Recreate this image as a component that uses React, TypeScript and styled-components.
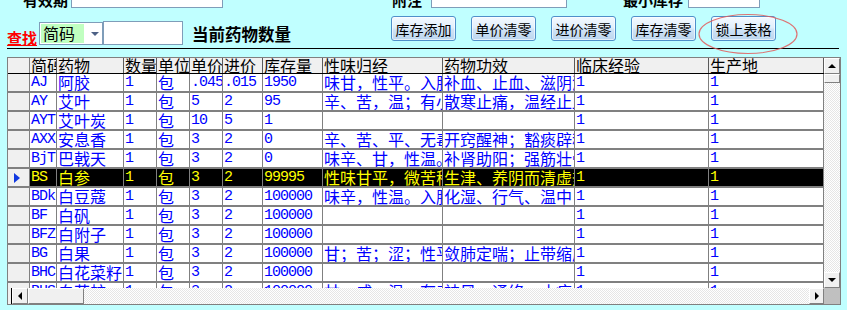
import React from "react";
import styled, { createGlobalStyle } from "styled-components";

const GlobalStyle = createGlobalStyle`
  html, body { margin: 0; padding: 0; background: #c0ffff; overflow: hidden; }
  body { font-family: "Noto Sans CJK SC", "Noto Sans", sans-serif; }
  * { box-sizing: border-box; }
`;

const COLS = "22px 27px 67px 33px 33px 33px 40px 60px 120px 132px 134px 115px";

const Page = styled.div`
  position: relative;
  width: 847px;
  height: 310px;
  overflow: hidden;
  background: #c0ffff;
`;

const TopFields = styled.div`
  display: flex;
  align-items: flex-end;
  height: 24px;
  margin-top: -16px;
  padding-left: 23px;
`;

const FieldLabel = styled.div<{ $gap: number; $w: number }>`
  margin-left: ${(p) => p.$gap}px;
  width: ${(p) => p.$w}px;
  font-size: 15px;
  font-weight: 700;
  line-height: 17px;
  white-space: nowrap;
  color: #000;
`;

const FieldBox = styled.div<{ $gap: number; $w: number }>`
  margin-left: ${(p) => p.$gap}px;
  width: ${(p) => p.$w}px;
  height: 22px;
  background: #fff;
  border: 1px solid #7f9db9;
`;

const Toolbar = styled.div`
  display: flex;
  align-items: flex-start;
  height: 32px;
  margin-top: 8px;
  padding-left: 7px;
`;

const FindLabel = styled.div`
  width: 30px;
  margin-top: 14px;
  font-size: 15px;
  font-weight: 700;
  line-height: 16px;
  color: #ff0000;
  text-decoration: underline;
  white-space: nowrap;
`;

const Combo = styled.div`
  display: flex;
  margin-left: 2px;
  margin-top: 6px;
  width: 64px;
  height: 23px;
  padding: 1px;
  background: #fff;
  border: 1px solid #7f9db9;
`;

const ComboValue = styled.div`
  width: 43px;
  height: 19px;
  padding-left: 2px;
  background: #c0ffc0;
  font-size: 16px;
  line-height: 19px;
  color: #000;
  white-space: nowrap;
`;

const ComboArrow = styled.div`
  flex: 1;
  display: flex;
  align-items: center;
  justify-content: center;
  padding-left: 4px;
  &::after {
    content: "";
    border-top: 4px solid #4d6185;
    border-left: 4px solid transparent;
    border-right: 4px solid transparent;
  }
`;

const SearchBox = styled.div`
  margin-top: 5px;
  width: 80px;
  height: 24px;
  background: #fff;
  border: 1px solid #7f9db9;
`;

const CountLabel = styled.div`
  margin-left: 9px;
  margin-top: 9px;
  width: 100px;
  font-size: 16.5px;
  font-weight: 700;
  line-height: 19px;
  color: #000;
  white-space: nowrap;
`;

const ButtonGroup = styled.div`
  display: flex;
  gap: 15px;
  margin-left: 99px;
`;

const ActionButton = styled.button`
  width: 65px;
  height: 25px;
  padding: 0;
  border: 1px solid #4f8fca;
  border-radius: 3px;
  background: linear-gradient(#f3f9ff 0%, #e2effb 45%, #cfe3f6 55%, #bcd6ef 100%);
  box-shadow: inset 0 0 0 1px rgba(255, 255, 255, 0.6);
  font-family: "Noto Sans CJK SC", "Noto Sans", sans-serif;
  font-size: 14px;
  line-height: 22px;
  color: #000;
  white-space: nowrap;
`;

const Separator = styled.div`
  margin-left: 7px;
  width: 832px;
  height: 1px;
  background: #000;
`;

const Grid = styled.div`
  display: grid;
  grid-template-columns: 816px 16px;
  grid-template-rows: 230px 16px;
  margin: 8px 0 0 7px;
  width: 834px;
  height: 248px;
  border: 1px solid #808080;
  background: #fff;
`;

const TableArea = styled.div`
  overflow: hidden;
  display: flex;
  flex-direction: column;
`;

const HeaderRow = styled.div`
  display: grid;
  grid-template-columns: ${COLS};
  height: 16px;
  flex: none;
  border-bottom: 1px solid #000;
  background: #f0f0f0;
`;

const HeaderCell = styled.div`
  overflow: hidden;
  white-space: nowrap;
  padding-left: 1px;
  border-right: 1px solid #5a5a5a;
  font-size: 16px;
  line-height: 15px;
  color: #000;
`;

const DataRow = styled.div<{ $selected?: boolean }>`
  display: grid;
  grid-template-columns: ${COLS};
  height: 19px;
  flex: none;
  border-bottom: 2px solid #808080;
  background: ${(p) => (p.$selected ? "#000" : "#fff")};
  color: ${(p) => (p.$selected ? "#ffff00" : "#0000ff")};
`;

const Indicator = styled.div`
  display: flex;
  align-items: center;
  padding-left: 6px;
  background: #f0f0f0;
  border-right: 1px solid #808080;
`;

const Pointer = styled.div`
  width: 0;
  height: 0;
  border-left: 6px solid #1038e0;
  border-top: 5px solid transparent;
  border-bottom: 5px solid transparent;
`;

const Cell = styled.div<{ $latin?: boolean }>`
  overflow: hidden;
  white-space: nowrap;
  padding-left: ${(p) => (p.$latin ? 1 : 1)}px;
  border-right: 1px solid #808080;
  font-family: ${(p) =>
    p.$latin
      ? '"Liberation Mono", "DejaVu Sans Mono", monospace'
      : '"Noto Sans CJK SC", "Noto Sans", sans-serif'};
  font-size: ${(p) => (p.$latin ? 15 : 16)}px;
  letter-spacing: ${(p) => (p.$latin ? "-1px" : "0")};
  line-height: 17px;
`;

const VScroll = styled.div`
  display: flex;
  flex-direction: column;
  background: repeating-conic-gradient(#ffffff 0 25%, #e6e6e6 0 50%) 0 0 / 2px 2px;
`;

const HScroll = styled.div`
  display: flex;
  background: repeating-conic-gradient(#ffffff 0 25%, #e6e6e6 0 50%) 0 0 / 2px 2px;
`;

const ScrollEdge = styled.div`
  width: 4px;
  background: #f0f0f0;
  border-right: 1px solid #000;
`;

const ScrollButton = styled.div<{ $w?: number; $h?: number }>`
  flex: none;
  width: ${(p) => p.$w ?? 16}px;
  height: ${(p) => p.$h ?? 16}px;
  display: flex;
  align-items: center;
  justify-content: center;
  background: #f0f0f0;
  border: 1px solid;
  border-color: #ffffff #808080 #808080 #ffffff;
`;

const Thumb = styled.div<{ $w?: number; $h?: number }>`
  flex: none;
  width: ${(p) => (p.$w ? `${p.$w}px` : "100%")};
  height: ${(p) => (p.$h ? `${p.$h}px` : "100%")};
  background: #f0f0f0;
  border: 1px solid;
  border-color: #ffffff #808080 #808080 #ffffff;
`;

const Spacer = styled.div`
  flex: 1;
`;

const Arrow = styled.div<{ $dir: "up" | "down" | "left" | "right" }>`
  width: 0;
  height: 0;
  ${(p) =>
    p.$dir === "up"
      ? "border-bottom: 4px solid #000; border-left: 4px solid transparent; border-right: 4px solid transparent;"
      : p.$dir === "down"
      ? "border-top: 4px solid #000; border-left: 4px solid transparent; border-right: 4px solid transparent;"
      : p.$dir === "left"
      ? "border-right: 4px solid #000; border-top: 4px solid transparent; border-bottom: 4px solid transparent;"
      : "border-left: 4px solid #000; border-top: 4px solid transparent; border-bottom: 4px solid transparent;"}
`;

const Corner = styled.div`
  background: #c0c0c0;
`;

const Annotation = styled.svg`
  position: absolute;
  left: 697px;
  top: 13px;
  pointer-events: none;
`;

const headers = ["简码", "药物", "数量", "单位", "单价", "进价", "库存量", "性味归经", "药物功效", "临床经验", "生产地"];

const rows: string[][] = [
  ["AJ", "阿胶", "1", "包", ".045", ".015", "1950", "味甘，性平。入肺、肝、肾经", "补血、止血、滋阴润燥", "1", "1"],
  ["AY", "艾叶", "1", "包", "5", "2", "95", "辛、苦，温；有小毒", "散寒止痛，温经止血", "1", "1"],
  ["AYT", "艾叶炭", "1", "包", "10", "5", "1", "", "", "1", "1"],
  ["AXX", "安息香", "1", "包", "3", "2", "0", "辛、苦、平、无毒", "开窍醒神；豁痰辟秽", "1", "1"],
  ["BjT", "巴戟天", "1", "包", "3", "2", "0", "味辛、甘，性温。", "补肾助阳；强筋壮骨", "1", "1"],
  ["BS", "白参", "1", "包", "3", "2", "99995", "性味甘平，微苦稍凉", "生津、养阴而清虚热", "1", "1"],
  ["BDk", "白豆蔻", "1", "包", "3", "2", "100000", "味辛，性温。入肺", "化湿、行气、温中", "1", "1"],
  ["BF", "白矾", "1", "包", "3", "2", "100000", "", "", "1", "1"],
  ["BFZ", "白附子", "1", "包", "3", "2", "100000", "", "", "1", "1"],
  ["BG", "白果", "1", "包", "3", "2", "100000", "甘；苦；涩；性平", "敛肺定喘；止带缩尿", "1", "1"],
  ["BHC", "白花菜籽", "1", "包", "3", "2", "100000", "", "", "1", "1"],
  ["BHS", "白花蛇", "1", "包", "3", "2", "100000", "甘、咸、温、有毒", "祛风、通络、止痉", "1", "1"],
];

const SELECTED = 5;
const isLatin = (s: string) => /^[\x00-\x7f]*$/.test(s);

const buttons = ["库存添加", "单价清零", "进价清零", "库存清零", "锁上表格"];

export default function App() {
  return (
    <Page>
      <GlobalStyle />
      <TopFields>
        <FieldLabel $gap={0} $w={45}>有效期</FieldLabel>
        <FieldBox $gap={3} $w={152} />
        <FieldLabel $gap={169} $w={28}>附注</FieldLabel>
        <FieldBox $gap={11} $w={136} />
        <FieldLabel $gap={56} $w={60}>最小库存</FieldLabel>
        <FieldBox $gap={5} $w={72} />
      </TopFields>

      <Toolbar>
        <FindLabel>查找</FindLabel>
        <Combo>
          <ComboValue>简码</ComboValue>
          <ComboArrow />
        </Combo>
        <SearchBox />
        <CountLabel>当前药物数量</CountLabel>
        <ButtonGroup>
          {buttons.map((b) => (
            <ActionButton key={b}>{b}</ActionButton>
          ))}
        </ButtonGroup>
      </Toolbar>

      <Separator />

      <Grid>
        <TableArea>
          <HeaderRow>
            <Indicator />
            {headers.map((h) => (
              <HeaderCell key={h}>{h}</HeaderCell>
            ))}
          </HeaderRow>
          {rows.map((r, i) => (
            <DataRow key={r[0]} $selected={i === SELECTED}>
              <Indicator>{i === SELECTED && <Pointer />}</Indicator>
              {r.map((c, j) => (
                <Cell key={j} $latin={isLatin(c)}>
                  {c}
                </Cell>
              ))}
            </DataRow>
          ))}
        </TableArea>
        <VScroll>
          <ScrollButton>
            <Arrow $dir="up" />
          </ScrollButton>
          <Thumb $h={9} />
          <Spacer />
          <ScrollButton>
            <Arrow $dir="down" />
          </ScrollButton>
        </VScroll>
        <HScroll>
          <ScrollEdge />
          <ScrollButton $w={16}>
            <Arrow $dir="left" />
          </ScrollButton>
          <Thumb $w={56} />
          <Spacer />
          <ScrollButton $w={15}>
            <Arrow $dir="right" />
          </ScrollButton>
        </HScroll>
        <Corner />
      </Grid>

      <Annotation width="104" height="44" viewBox="0 0 104 44">
        <ellipse cx="51" cy="21" rx="49" ry="19.5" fill="none" stroke="#e25a5a" strokeWidth="1.2" opacity="0.85" />
      </Annotation>
    </Page>
  );
}
